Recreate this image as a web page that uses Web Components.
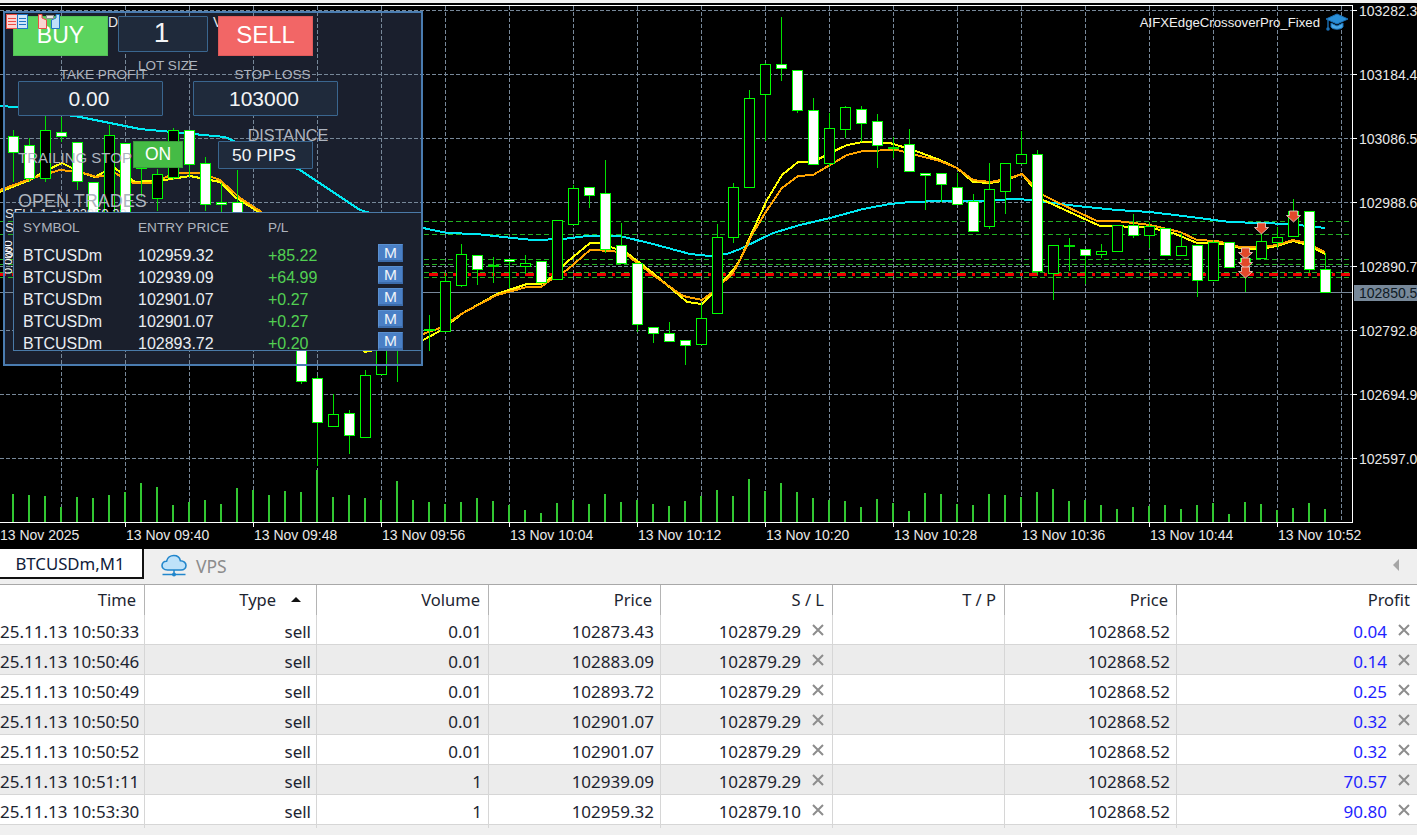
<!DOCTYPE html>
<html>
<head>
<meta charset="utf-8">
<title>BTCUSDm,M1</title>
<style>
  html, body { margin: 0; height: 100%; overflow: hidden; background: #f0f0f0; }
  body { display: flex; flex-direction: column; width: 1417px; height: 835px; font-family: "Noto Sans", sans-serif; }
</style>
</head>
<body>
<mt-chart>
  <trade-panel></trade-panel>
</mt-chart>
<tab-bar>
  <span slot="active">BTCUSDm,M1</span>
  <span slot="vps">VPS</span>
</tab-bar>
<order-table></order-table>

<script>
// candles: k, bodyTop, bodyBottom, wickTop, wickBottom, w(hite) / b(lack)
const CANDLES = [
  [0,136,152,130,182,"w"],[1,145,178,138,182,"w"],[2,130,178,116,182,"b"],[3,132,136,117,142,"w"],
  [4,142,181,142,190,"w"],[5,182,216,182,225,"w"],[6,135,216,125,225,"b"],[7,143,216,143,225,"w"],
  [8,146,168,146,197,"b"],[9,174,198,169,211,"b"],[10,130,177,128,180,"b"],[11,130,164,130,177,"w"],
  [12,163,204,157,211,"w"],[13,202,204,183,216,"w"],[14,202,222,170,230,"w"],
  [18,330,381,325,384,"w"],[19,378,422,376,466,"w"],[20,414,426,394,427,"b"],[21,413,435,410,454,"w"],
  [22,375,437,370,437,"b"],[23,340,374,335,374,"b"],[24,300,340,290,382,"w"],
  [26,329,329,315,351,"b"],[27,281,331,273,331,"b"],[28,254,285,244,287,"b"],[29,255,269,255,285,"w"],
  [30,265,267,257,283,"g"],[31,259,261,259,288,"w"],[32,263,266,255,274,"b"],[33,261,282,261,282,"w"],
  [34,220,279,220,279,"b"],[35,188,224,185,224,"b"],[36,187,195,187,208,"w"],[37,193,249,160,253,"w"],
  [38,245,263,223,263,"w"],[39,263,324,263,332,"w"],[40,327,333,327,343,"w"],[41,333,341,322,341,"w"],
  [42,340,345,340,365,"w"],[43,318,344,303,344,"b"],[44,237,313,224,313,"b"],[45,187,237,183,243,"b"],
  [46,98,187,90,187,"b"],[47,64,94,63,141,"b"],[48,64,68,17,81,"w"],[49,70,110,70,113,"w"],
  [50,110,164,98,164,"w"],[51,128,163,113,167,"b"],[52,107,129,106,138,"b"],[53,109,123,106,142,"w"],
  [54,121,145,114,168,"w"],[55,147,149,137,158,"g"],[56,144,171,129,171,"w"],[57,173,175,173,210,"w"],
  [58,173,184,173,202,"w"],[59,187,204,173,204,"w"],[60,201,231,194,231,"w"],[61,189,226,163,229,"b"],
  [62,163,191,163,214,"b"],[63,154,163,131,163,"b"],[64,154,271,150,275,"w"],[65,245,273,245,300,"b"],
  [66,245,247,238,271,"g"],[67,249,255,249,284,"w"],[68,251,254,244,258,"b"],[69,225,251,225,251,"b"],
  [70,225,235,214,238,"w"],[71,226,235,222,248,"b"],[72,228,255,228,255,"w"],[73,246,255,233,255,"b"],
  [74,245,280,245,297,"w"],[75,242,280,240,280,"b"],[76,242,267,242,267,"w"],[77,258,263,250,292,"b"],
  [78,241,258,232,258,"b"],[79,237,242,227,248,"b"],[80,211,236,199,236,"b"],[81,211,269,211,273,"w"],
  [82,269,292,253,292,"w"]
];

const VOLUME_LEFT = [494,495,496,507,497,498,495,492,483,487,505,502,500,504,488,490,495,491,492,470,497,495,498,500,481,500];
const VOLUME_RIGHT = [111,117,111,99,108,120,135,144,114,105,117,87,111,105,117,123,108,93,75,93,42,79,54,81,99,105,108,126,102,115,138,84,87,117,120,87,90,96,81,72,108,105,120,132,126,123,120,132,120,114,147,111,117,135,129,114,132];

const CYAN = "0,106 15,107 80,117 140,129 225,137 300,170 360,210 423,228 447,233 477,234 503,237 533,240 563,239 587,236 620,236 653,244 690,254 710,256 727,254 740,249 773,233 800,225 830,218 863,209 890,204 910,202 940,201 973,201 1017,199 1030,200 1077,206 1117,210 1150,212 1183,216 1230,222 1290,224 1325,228";
const YELLOW = "0,192 30,180 47,170 62,163 80,172 95,177 113,167 135,182 165,180 190,176 220,182 235,197 257,211 300,270 365,352 423,340 440,331 463,313 497,294 527,284 541,284 552,277 567,262 590,243 600,243 627,253 653,273 687,302 702,304 713,293 733,270 740,260 750,237 767,200 782,175 798,162 813,162 830,153 847,145 863,142 890,143 913,150 940,160 957,168 973,182 990,183 1007,180 1022,174 1043,200 1063,209 1100,226 1147,227 1173,233 1197,243 1217,243 1240,248 1260,249 1277,246 1293,241 1307,245 1325,254";
const ORANGE = "0,190 33,178 60,170 80,172 97,177 115,173 133,183 150,183 177,173 200,173 220,180 240,198 260,211 300,268 365,345 423,334 440,328 463,313 497,295 527,287 541,287 552,279 567,270 590,250 613,251 627,255 653,275 683,296 702,300 713,292 733,273 740,260 753,233 767,210 782,188 798,176 813,175 830,165 847,155 863,151 897,150 920,156 940,161 957,168 973,180 990,182 1007,179 1022,174 1043,195 1063,205 1097,221 1117,221 1150,225 1180,232 1197,240 1217,241 1240,247 1260,247 1277,245 1293,240 1307,243 1325,252";

const SVG_NS = "http://www.w3.org/2000/svg";

function el(parent, name, attrs, text) {
  const node = document.createElementNS(SVG_NS, name);
  for (const key in attrs) node.setAttribute(key, attrs[key]);
  if (text !== undefined) node.textContent = text;
  parent.appendChild(node);
  return node;
}

class MtChart extends HTMLElement {
  constructor() {
    super();
    const shadow = this.attachShadow({ mode: "open" });
    shadow.innerHTML = `
      <style>
        :host { display: block; position: relative; width: 1417px; height: 549px; flex: none; background: #000; overflow: hidden; }
        svg { display: block; font-family: "Liberation Sans", Arial, sans-serif; }
        .cap { position: absolute; left: 1325px; top: 13px; }
      </style>
      <svg id="plot" width="1417" height="549" viewBox="0 0 1417 549" shape-rendering="crispEdges"></svg>
      <svg class="cap" width="24" height="20" viewBox="0 0 24 20">
        <path d="M12 1 L23 6 L12 11 L1 6 Z" fill="#2a8fd8" stroke="#1a6fb4" stroke-width="1"/>
        <path d="M6 10 V14 C8 17 16 17 18 14 V10 L12 13 Z" fill="#48a8e8" stroke="#1a6fb4" stroke-width="1"/>
        <path d="M3 7 V15" stroke="#1a6fb4" stroke-width="1.4" fill="none"/>
        <circle cx="3" cy="16" r="1.8" fill="#1a6fb4"/>
      </svg>
      <slot></slot>
    `;
    this.draw(shadow.getElementById("plot"));
  }

  draw(svg) {
    el(svg, "rect", { x: 0, y: 0, width: 1417, height: 3, fill: "#f0f0f0" });

    // panel backdrop sits under the chart, the controls go over it
    el(svg, "rect", { x: 3, y: 11, width: 420, height: 355, fill: "#1a1f2d" });

    const grid = { stroke: "#778899", "stroke-width": 1, "stroke-dasharray": "4 2" };
    for (let i = 0; i < 8; i++) {
      const y = 10.5 + 64 * i;
      el(svg, "line", { x1: 0, x2: 1352, y1: y, y2: y, ...grid });
    }
    for (let i = 0; i < 21; i++) {
      const x = 61.5 + 64 * i;
      el(svg, "line", { x1: x, x2: x, y1: 6, y2: 522, ...grid });
    }

    // levels
    [221, 234, 259, 264, 272, 277].forEach(y => {
      el(svg, "line", { x1: 0, x2: 1352, y1: y + 0.5, y2: y + 0.5, stroke: "#22b022", "stroke-dasharray": "5 3" });
    });
    el(svg, "line", {
      x1: 0, x2: 1352, y1: 274.5, y2: 274.5, stroke: "#f00000", "stroke-width": 3,
      "stroke-dasharray": "9 6 3 6", "stroke-dashoffset": 2.7
    });
    el(svg, "line", { x1: 0, x2: 1352, y1: 292.5, y2: 292.5, stroke: "#778899" });

    // moving averages
    el(svg, "polyline", { points: CYAN, fill: "none", stroke: "#00e8f2", "stroke-width": 2 });
    el(svg, "polyline", { points: YELLOW, fill: "none", stroke: "#ffff00", "stroke-width": 2 });
    el(svg, "polyline", { points: ORANGE, fill: "none", stroke: "#ffa500", "stroke-width": 2 });

    // volumes
    VOLUME_LEFT.forEach((top, k) => {
      el(svg, "rect", { x: 12 + 16 * k, y: top, width: 2, height: 522 - top, fill: "#32c832" });
    });
    VOLUME_RIGHT.forEach((z, i) => {
      const top = Math.round(465 + z / 3);
      el(svg, "rect", { x: 12 + 16 * (i + 26), y: top, width: 2, height: 522 - top, fill: "#32c832" });
    });

    // candles
    for (const [k, top, bottom, hi, lo, kind] of CANDLES) {
      const x = 13 + 16 * k;
      el(svg, "line", { x1: x + 0.5, x2: x + 0.5, y1: hi, y2: lo, stroke: "#00e000" });
      if (kind === "g") {
        el(svg, "rect", { x: x - 5, y: top, width: 11, height: bottom - top, fill: "#00e000" });
      } else {
        el(svg, "rect", {
          x: x - 4.5, y: top + 0.5, width: 10, height: Math.max(bottom - top, 1),
          fill: kind === "w" ? "#fff" : "#000", stroke: "#00ff00"
        });
      }
    }

    // sell arrows
    [[1261, 223], [1293, 211], [1245, 248], [1245, 258], [1245, 267]].forEach(([x, y]) => {
      el(svg, "polygon", {
        points: `${x - 3.5},${y} ${x + 4.5},${y} ${x + 4.5},${y + 4.5} ${x + 7.5},${y + 4.5} ${x + 0.5},${y + 11} ${x - 6.5},${y + 4.5} ${x - 3.5},${y + 4.5}`,
        fill: "#e2492b", stroke: "#efe2da", "stroke-width": 0.8, "shape-rendering": "auto"
      });
    });

    // leftovers of the trade labels under the panel
    const small = { fill: "#e6e6e6", "font-size": 13 };
    el(svg, "text", { x: 5, y: 218, ...small }, "SELL 1 at 102959.32");
    el(svg, "text", { x: 5, y: 232, ...small }, "S");
    el(svg, "text", { x: 5, y: 257, ...small }, "S");
    el(svg, "text", { x: 0, y: 0, fill: "#fff", "font-size": 11, transform: "translate(12 274) rotate(-90)" }, "0.0000");

    el(svg, "text", { x: 108, y: 27, fill: "#e8e8e8", "font-size": 14 }, "D");
    el(svg, "text", { x: 213, y: 27, fill: "#e8e8e8", "font-size": 14 }, "V");

    el(svg, "text", { x: 1320, y: 27, fill: "#f0f0f0", "font-size": 13.2, "text-anchor": "end" }, "AIFXEdgeCrossoverPro_Fixed");

    // frame of the plot
    el(svg, "line", { x1: 0, x2: 1352, y1: 5.5, y2: 5.5, stroke: "#fff" });
    el(svg, "line", { x1: 1352.5, x2: 1352.5, y1: 5, y2: 523, stroke: "#fff" });
    el(svg, "line", { x1: 0, x2: 1352, y1: 522.5, y2: 522.5, stroke: "#fff" });

    // price axis
    ["103282.3", "103184.4", "103086.5", "102988.6", "102890.7", "102792.8", "102694.9", "102597.0"].forEach((label, i) => {
      const y = 10 + 64 * i;
      el(svg, "line", { x1: 1353, x2: 1357, y1: y + 0.5, y2: y + 0.5, stroke: "#fff" });
      el(svg, "text", { x: 1359, y: y + 6, fill: "#e8e8e8", "font-size": 14 }, label);
    });
    el(svg, "rect", { x: 1354, y: 285, width: 63, height: 16, fill: "#778899" });
    el(svg, "text", { x: 1359, y: 298, fill: "#0e1a24", "font-size": 14 }, "102850.5");

    // time axis
    ["13 Nov 2025", "13 Nov 09:40", "13 Nov 09:48", "13 Nov 09:56", "13 Nov 10:04", "13 Nov 10:12", "13 Nov 10:20",
     "13 Nov 10:28", "13 Nov 10:36", "13 Nov 10:44", "13 Nov 10:52"].forEach((label, i) => {
      const x = i === 0 ? 0 : 126 + 128 * (i - 1);
      if (i > 0) el(svg, "line", { x1: x - 0.5, x2: x - 0.5, y1: 523, y2: 527, stroke: "#fff" });
      el(svg, "text", { x: x, y: 540, fill: "#e8e8e8", "font-size": 14 }, label);
    });
  }
}

class PanelField extends HTMLElement {
  constructor() {
    super();
    const shadow = this.attachShadow({ mode: "open" });
    shadow.innerHTML = `
      <style>
        :host { display: flex; flex-direction: column; flex: none; width: var(--w, 90px); font-family: "Liberation Sans", Arial, sans-serif; }
        .label {
          display: flex; align-items: flex-end; justify-content: center;
          height: var(--drop, 0px); margin-bottom: calc(-1 * var(--drop, 0px));
          padding-left: var(--shift, 0); color: #aeb4be; font-size: var(--label-size, 13.5px); white-space: nowrap;
        }
        :host([below]) .label { order: 2; align-items: flex-start; height: 0; margin: 0; padding-top: var(--gap, 0); }
        .box {
          display: flex; align-items: center; justify-content: center; box-sizing: border-box; height: var(--h, 40px);
          padding: 0 3px var(--lift, 0) 0;
          background: #1f2a3b; border: 1px solid #3a668f; border-radius: 1px; color: #f2f4f6;
          font-size: var(--fs, 21px);
        }
      </style>
      <div class="label"></div>
      <div class="box"><slot></slot></div>
    `;
    shadow.querySelector(".label").textContent = this.getAttribute("label");
  }
}

class TradeButton extends HTMLElement {
  constructor() {
    super();
    const shadow = this.attachShadow({ mode: "open" });
    shadow.innerHTML = `
      <style>
        :host {
          display: flex; align-items: center; justify-content: center; flex: none; box-sizing: border-box;
          width: 95px; height: 40px; padding-bottom: 2px; color: #fff; background: var(--bg); border: 1px solid var(--edge);
          font: 24px "Liberation Sans", Arial, sans-serif;
        }
      </style>
      <slot></slot>
    `;
  }
}

class TradePanel extends HTMLElement {
  constructor() {
    super();
    const shadow = this.attachShadow({ mode: "open" });
    shadow.innerHTML = `
      <style>
        :host {
          position: absolute; left: 3px; top: 11px; box-sizing: border-box; width: 420px; height: 355px;
          border: 2px solid #4a7cb0; padding: 3px 0 0 8px; font-family: "Liberation Sans", Arial, sans-serif;
        }
        .row { display: flex; }
        .top { gap: 10px; height: 40px; }
        .buy { --bg: #5bd35e; --edge: #52c055; font-size: 23px; }
        .sell { --bg: #f26666; --edge: #e05a5a; }
        .levels { gap: 30px; margin: 25px 0 0 5px; }
        .trail { margin: 25px 0 0 5px; height: 28px; }
        .trail-label { width: 115px; flex: none; padding-top: 3px; line-height: 28px; color: #aeb4be; font-size: 15px; white-space: nowrap; }
        .on {
          display: flex; align-items: center; justify-content: center; box-sizing: border-box; flex: none;
          width: 50px; height: 27px; padding-bottom: 1px; background: #45bb45; border: 1px solid #3a9c3a; color: #fff; font-size: 17.5px;
        }
        .dist { margin-left: 35px; }
        .title { margin: 22px 0 0 5px; height: 21px; line-height: 21px; color: #aeb4be; font-size: 18px; white-space: nowrap; }
        .icons { position: absolute; left: 1px; top: 1px; }
      </style>
      <div class="row top">
        <trade-button class="buy">BUY</trade-button>
        <panel-field below label="LOT SIZE" style="--w:90px;--h:40px;--fs:28px;--shift:10px;--gap:6px;--lift:2px">1</panel-field>
        <trade-button class="sell">SELL</trade-button>
      </div>
      <div class="row levels">
        <panel-field label="TAKE PROFIT" style="--w:145px;--h:35px;--shift:26px;--drop:1px">0.00</panel-field>
        <panel-field label="STOP LOSS" style="--w:145px;--h:35px;--shift:14px;--drop:1px">103000</panel-field>
      </div>
      <div class="row trail">
        <div class="trail-label">TRAILING STOP</div>
        <div class="on">ON</div>
        <panel-field class="dist" label="DISTANCE" style="--w:95px;--h:28px;--fs:17.4px;--shift:45px;--label-size:16.2px;--drop:4px">50 PIPS</panel-field>
      </div>
      <div class="title">OPEN TRADES</div>
      <open-trades></open-trades>
      <svg class="icons" width="54" height="16" viewBox="0 0 54 16" shape-rendering="crispEdges">
        <rect x="0.5" y="0.5" width="11" height="14" fill="#fbd5d2" stroke="#ee4c45"/>
        <rect x="11.5" y="0.5" width="10" height="14" fill="#cfe6fa" stroke="#1f78c4"/>
        <path d="M2 4.5 H10 M2 7.5 H10 M2 10.5 H10" stroke="#ee4c45" fill="none"/>
        <path d="M13 4.5 H20 M13 7.5 H20 M13 10.5 H20" stroke="#1f78c4" fill="none"/>
        <path d="M32.5 0.5 H36 V4 L40.5 6 V14.5 H32.5 Z" fill="#fbd5d2" stroke="#ee4c45" shape-rendering="auto"/>
        <path d="M53.5 0.5 H50 V4 L45.5 6 V14.5 H53.5 Z" fill="#bfe0fa" stroke="#1f78c4" shape-rendering="auto"/>
        <rect x="40" y="1" width="7" height="3" fill="#e8e8e8" stroke="#8e8e8e"/>
      </svg>
    `;
  }
}

const OPEN_TRADES = [
  ["BTCUSDm", "102959.32", "+85.22"],
  ["BTCUSDm", "102939.09", "+64.99"],
  ["BTCUSDm", "102901.07", "+0.27"],
  ["BTCUSDm", "102901.07", "+0.27"],
  ["BTCUSDm", "102893.72", "+0.20"]
];

class OpenTrades extends HTMLElement {
  constructor() {
    super();
    const shadow = this.attachShadow({ mode: "open" });
    const rows = OPEN_TRADES.map(([sym, price, pl]) => `
      <div class="row">
        <span>${sym}</span><span>${price}</span><span class="pl">${pl}</span><span class="m">M</span>
      </div>`).join("");
    shadow.innerHTML = `
      <style>
        :host {
          display: block; box-sizing: border-box; width: 409px; height: 139px; overflow: hidden;
          background: #1a1f2c; border: 1px solid #4a7aa8; padding: 6px 0 0 9px;
          font-family: "Liberation Sans", Arial, sans-serif; color: #e9edf2;
        }
        .row { display: grid; grid-template-columns: 115px 130px 110px 25px; height: 22px; font-size: 16px; line-height: 24px; }
        .head { height: 17px; margin-bottom: 8px; line-height: 17px; font-size: 13.6px; color: #aeb4be; }
        .pl { color: #52d052; }
        .m {
          box-sizing: border-box; height: 18px; line-height: 16px; text-align: center; font-size: 15.5px; color: #f0f4fa;
          background: #4a80c6; border: 1px solid #5a90d0; border-right-color: #3c6cab; border-bottom: 2px solid #3c6cab;
        }
      </style>
      <div class="row head"><span>SYMBOL</span><span>ENTRY PRICE</span><span>P/L</span></div>
      ${rows}
    `;
  }
}

class TabBar extends HTMLElement {
  constructor() {
    super();
    const shadow = this.attachShadow({ mode: "open" });
    shadow.innerHTML = `
      <style>
        :host {
          display: flex; align-items: flex-start; flex: none; box-sizing: border-box; width: 1417px; height: 36px;
          background: #efefef; border-bottom: 1px solid #a8a8a8; font-family: "Noto Sans", sans-serif; font-size: 16.8px;
        }
        .active {
          display: flex; align-items: center; justify-content: center; box-sizing: border-box; width: 144px; height: 30px;
          padding-right: 2px; background: #fff; color: #10203a; border-right: 2px solid #111; border-bottom: 2px solid #111;
        }
        .vps { display: flex; align-items: center; gap: 9px; height: 34px; margin-left: 17px; color: #8c8c8c; font-size: 17.5px; }
        .back { margin: 10px 17px 0 auto; }
      </style>
      <div class="active"><slot name="active"></slot></div>
      <div class="vps">
        <svg width="26" height="24" viewBox="0 0 26 24">
          <path d="M6.5 16 C2.5 16 1 13.5 1 11.5 C1 8.8 3.2 7 5.6 7.2 C6.4 3.6 9.6 1.5 12.8 1.5 C16.2 1.5 18.8 3.8 19.4 6.8 C22.6 6.8 25 9 25 11.6 C25 14 23 16 20 16 Z"
            fill="#bfe2f9" stroke="#2286cc" stroke-width="1.6"/>
          <path d="M13 16 V20 M1.5 20.5 H24.5" stroke="#2286cc" stroke-width="1.5" fill="none"/>
          <circle cx="13" cy="20.5" r="2" fill="#2286cc"/>
        </svg>
        <slot name="vps"></slot>
      </div>
      <svg class="back" width="7" height="12" viewBox="0 0 7 12"><path d="M6 0 V12 L0 6 Z" fill="#a6a6a6"/></svg>
    `;
  }
}

const CLOSE_ICON = `<svg width="12" height="12" viewBox="0 0 12 12"><path d="M1 1 L11 11 M11 1 L1 11" stroke="#8d8d8d" stroke-width="2" fill="none"/></svg>`;
const COLUMNS = "145px repeat(6, 172px) 1fr";

class OrderHeader extends HTMLElement {
  constructor() {
    super();
    const shadow = this.attachShadow({ mode: "open" });
    const cols = ["Time", "Type", "Volume", "Price", "S / L", "T / P", "Price", "Profit"];
    shadow.innerHTML = `
      <style>
        :host {
          display: grid; grid-template-columns: ${COLUMNS}; height: 30px; background: #fff; color: #1c2430;
          font-size: 16.5px; line-height: 30px;
        }
        div { padding-right: 8px; text-align: right; border-right: 1px solid #b4b4b4; }
        div:last-child { padding-right: 7px; border-right: 0; }
        .sorted { display: flex; justify-content: flex-end; align-items: center; gap: 15px; padding-right: 15px; }
        .sorted i { width: 0; height: 0; border: 5px solid transparent; border-top: 0; border-bottom: 5px solid #111; margin-bottom: 2px; }
      </style>
      ${cols.map((c, i) => i === 1 ? `<div class="sorted"><span>${c}</span><i></i></div>` : `<div>${c}</div>`).join("")}
    `;
  }
}

class OrderRow extends HTMLElement {
  constructor() {
    super();
    const shadow = this.attachShadow({ mode: "open" });
    const a = n => this.getAttribute(n) || "";
    shadow.innerHTML = `
      <style>
        :host {
          display: grid; grid-template-columns: ${COLUMNS}; box-sizing: border-box; height: 30px;
          background: #fff; color: #1c2430; border-bottom: 1px solid #d6d6d6; font-size: 17px; line-height: 33px;
        }
        :host([alt]) { background: #ececec; }
        div { padding-right: 6px; text-align: right; border-right: 1px solid #d6d6d6; white-space: nowrap; }
        div:last-child { border-right: 0; }
        .sell { padding-right: 5px; }
        .x { display: flex; justify-content: flex-end; align-items: center; gap: 11px; padding-right: 8px; }
        .x svg { margin-bottom: 3px; }
        .profit { padding-right: 7px; }
        .profit span { color: #1f1fff; }
      </style>
      <div>${a("time")}</div>
      <div class="sell">sell</div>
      <div>${a("vol")}</div>
      <div>${a("price")}</div>
      <div class="x"><span>${a("sl")}</span>${CLOSE_ICON}</div>
      <div></div>
      <div>102868.52</div>
      <div class="x profit"><span>${a("profit")}</span>${CLOSE_ICON}</div>
    `;
  }
}

const ORDERS = [
  ["25.11.13 10:50:33", "0.01", "102873.43", "102879.29", "0.04"],
  ["25.11.13 10:50:46", "0.01", "102883.09", "102879.29", "0.14"],
  ["25.11.13 10:50:49", "0.01", "102893.72", "102879.29", "0.25"],
  ["25.11.13 10:50:50", "0.01", "102901.07", "102879.29", "0.32"],
  ["25.11.13 10:50:52", "0.01", "102901.07", "102879.29", "0.32"],
  ["25.11.13 10:51:11", "1", "102939.09", "102879.29", "70.57"],
  ["25.11.13 10:53:30", "1", "102959.32", "102879.10", "90.80"]
];

class OrderTable extends HTMLElement {
  constructor() {
    super();
    const shadow = this.attachShadow({ mode: "open" });
    shadow.innerHTML = `
      <style>
        :host { display: block; flex: 1; min-height: 0; overflow: hidden; background: #f0f0f0; font-family: "Noto Sans", sans-serif; }
      </style>
      <order-header></order-header>
      ${ORDERS.map(([time, vol, price, sl, profit], i) =>
        `<order-row ${i % 2 ? "alt" : ""} time="${time}" vol="${vol}" price="${price}" sl="${sl}" profit="${profit}"></order-row>`
      ).join("")}
    `;
  }
}

customElements.define("panel-field", PanelField);
customElements.define("trade-button", TradeButton);
customElements.define("open-trades", OpenTrades);
customElements.define("trade-panel", TradePanel);
customElements.define("mt-chart", MtChart);
customElements.define("tab-bar", TabBar);
customElements.define("order-header", OrderHeader);
customElements.define("order-row", OrderRow);
customElements.define("order-table", OrderTable);
</script>
</body>
</html>
